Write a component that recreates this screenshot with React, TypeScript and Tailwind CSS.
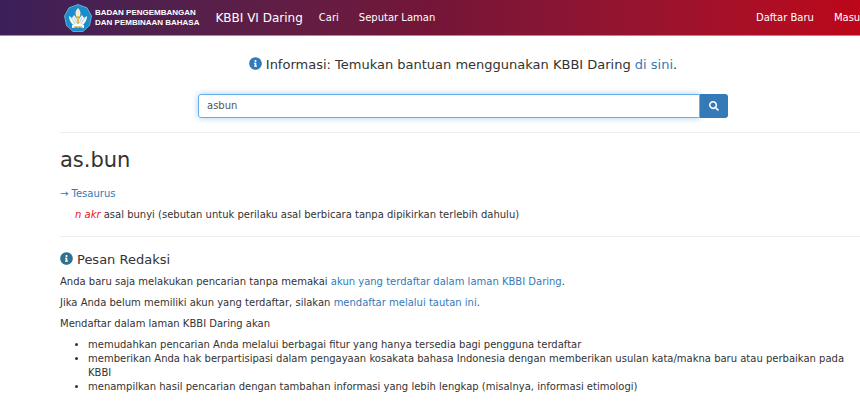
import { useState } from "react";
import { FaInfoCircle, FaSearch } from "react-icons/fa";

const benefits = [
  "memudahkan pencarian Anda melalui berbagai fitur yang hanya tersedia bagi pengguna terdaftar",
  "memberikan Anda hak berpartisipasi dalam pengayaan kosakata bahasa Indonesia dengan memberikan usulan kata/makna baru atau perbaikan pada KBBI",
  "menampilkan hasil pencarian dengan tambahan informasi yang lebih lengkap (misalnya, informasi etimologi)",
];

function Logo() {
  return (
    <svg viewBox="0 0 28 28" className="size-7 shrink-0" aria-hidden="true">
      <path
        d="M14 0.5 L23 3.8 L27.5 12 L25.5 21.5 L19 27.5 H9 L2.5 21.5 L0.5 12 L5 3.8 Z"
        fill="#1e8cc8"
        stroke="#6cc3ea"
        strokeWidth="0.8"
        strokeLinejoin="round"
      />
      <path d="M5 12 C5 17 8 21 12 22 H16 C20 21 23 17 23 12 L20 14 L18 11 L14 16 L10 11 L8 14 Z" fill="#f4f8fa" />
      <path d="M7.500 14 L11 20 M10 13 L12.500 19 M20.500 14 L17 20 M18 13 L15.500 19" stroke="#8fbcd3" strokeWidth="0.6" />
      <path d="M14 4 C17 7 17 10 15.500 13 H12.500 C11 10 11 7 14 4 Z" fill="#f5ecd0" />
      <path d="M12.500 12 H15.500 L15 20 H13 Z" fill="#e2bc58" />
      <path d="M8 21 L13 20 L14 21 L15 20 L20 21 V24 L15 23 L14 24 L13 23 L8 24 Z" fill="#fff" />
      <path d="M10 22.500 H18" stroke="#d7b45e" strokeWidth="0.8" />
    </svg>
  );
}

export default function App() {
  const [query, setQuery] = useState("asbun");

  return (
    <div className="overflow-x-hidden bg-white font-['DejaVu_Sans',sans-serif] text-[10px] leading-[14px] text-[#333]">
      <nav className="flex h-9 items-center overflow-hidden border-b border-[#e8860c] bg-linear-to-r from-[#3c1f58] via-[#741538] to-[#bd0618] pl-16 whitespace-nowrap text-white">
        <a href="#" className="flex items-center gap-[3px]">
          <Logo />
          <span className="font-['Liberation_Sans',sans-serif] text-[8px] leading-[10px] font-bold">
            BADAN PENGEMBANGAN
            <br />
            DAN PEMBINAAN BAHASA
          </span>
        </a>
        <a href="#" className="ml-4 text-xs">
          KBBI VI Daring
        </a>
        <a href="#" className="ml-4">
          Cari
        </a>
        <a href="#" className="ml-5">
          Seputar Laman
        </a>
        <div className="-mr-1.5 ml-auto flex gap-5">
          <a href="#">Daftar Baru</a>
          <a href="#">Masuk</a>
        </div>
      </nav>

      <main className="-mr-1.5 ml-15">
        <h4 className="mt-[21px] text-center text-[13px] leading-4">
          <FaInfoCircle className="mr-1 inline align-[-1px] text-[#337ab7]" />
          Informasi: Temukan bantuan menggunakan KBBI Daring{" "}
          <a href="#" className="text-[#337ab7]">
            di sini
          </a>
          .
        </h4>

        <form onSubmit={(event) => event.preventDefault()} className="mx-auto mt-[21px] flex h-6 max-w-[530px]">
          <input
            type="text"
            aria-label="Cari kata"
            value={query}
            onChange={(event) => setQuery(event.target.value)}
            className="min-w-0 flex-1 rounded-l-[3px] border border-[#66afe9] px-2 text-[#555] shadow-[0_0_6px_rgba(102,175,233,0.6)] outline-none"
          />
          <button type="submit" aria-label="Cari" className="flex w-7 items-center justify-center rounded-r-[3px] bg-[#337ab7] text-white">
            <FaSearch className="size-2.5" />
          </button>
        </form>

        <hr className="mt-3.5 border-[#eee]" />

        <h2 className="mt-[15px] text-[21px] leading-6">as.bun</h2>
        <p className="mt-[15px]">
          <a href="#" className="text-[#337ab7]">
            → Tesaurus
          </a>
        </p>
        <p className="mt-[7px] pl-[15px]">
          <span className="text-[#e8131d] italic">n akr</span> asal bunyi (sebutan untuk perilaku asal berbicara tanpa
          dipikirkan terlebih dahulu)
        </p>

        <hr className="mt-3.5 border-[#eee]" />

        <h4 className="mt-[15px] text-[13px] leading-4">
          <FaInfoCircle className="mr-1 inline align-[-1px] text-[#31708f]" />
          Pesan Redaksi
        </h4>
        <p className="mt-[7px]">
          Anda baru saja melakukan pencarian tanpa memakai{" "}
          <a href="#" className="text-[#337ab7]">
            akun yang terdaftar dalam laman KBBI Daring
          </a>
          .
        </p>
        <p className="mt-[7px]">
          Jika Anda belum memiliki akun yang terdaftar, silakan{" "}
          <a href="#" className="text-[#337ab7]">
            mendaftar melalui tautan ini
          </a>
          .
        </p>
        <p className="mt-[7px]">Mendaftar dalam laman KBBI Daring akan</p>
        <ul className="mt-[7px] list-disc pr-5 pb-2 pl-7">
          {benefits.map((benefit) => (
            <li key={benefit}>{benefit}</li>
          ))}
        </ul>
      </main>
    </div>
  );
}
